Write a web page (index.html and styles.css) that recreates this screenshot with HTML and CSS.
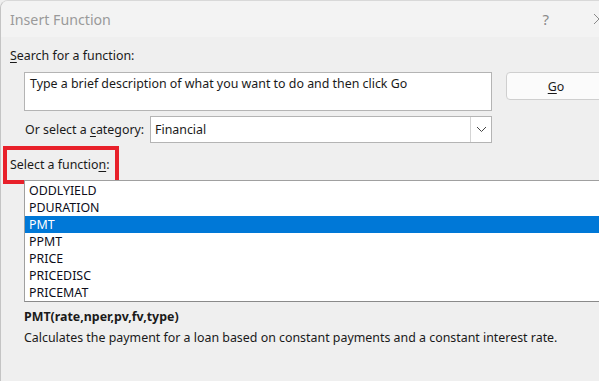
FILE: index.html
```html
<!DOCTYPE html>
<html>
<head>
<meta charset="utf-8">
<link rel="stylesheet" href="styles.css">
</head>
<body>
<div class="window">
  <div class="titlebar">
    <span class="title">Insert Function</span>
    <span class="help">?</span>
    <svg class="close" width="12" height="12" viewBox="0 0 12 12"><path d="M1 1 L11 11 M11 1 L1 11" stroke="#8a8a8a" stroke-width="1" fill="none"/></svg>
  </div>
  <div class="content">
    <div class="label search-label"><u>S</u>earch for a function:</div>
    <div class="search-row">
      <div class="search-box">Type a brief description of what you want to do and then click Go</div>
      <div class="go-btn"><u>G</u>o</div>
    </div>
    <div class="category-row">
      <span class="cat-label">Or select a <u>c</u>ategory:</span>
      <div class="select">
        <span class="select-text">Financial</span>
        <span class="select-btn">
          <svg width="11" height="7" viewBox="0 0 11 7"><path d="M1 1 L5.5 5.5 L10 1" stroke="#444" stroke-width="1" fill="none"/></svg>
        </span>
      </div>
    </div>
    <div class="fn-label-wrap">
      <span class="label">Select a functio<u>n</u>:</span>
      <span class="highlight-box"></span>
    </div>
    <div class="list">
      <div class="item">ODDLYIELD</div>
      <div class="item">PDURATION</div>
      <div class="item selected">PMT</div>
      <div class="item">PPMT</div>
      <div class="item">PRICE</div>
      <div class="item">PRICEDISC</div>
      <div class="item">PRICEMAT</div>
    </div>
    <div class="signature">PMT(rate,nper,pv,fv,type)</div>
    <div class="desc">Calculates the payment for a loan based on constant payments and a constant interest rate.</div>
  </div>
</div>
</body>
</html>
```

FILE: styles.css
```css
* { box-sizing: border-box; }
html, body {
  margin: 0;
  padding: 0;
  width: 599px;
  height: 381px;
  overflow: hidden;
  background: #efefef;
}
body {
  font-family: "Noto Sans", "Open Sans", sans-serif;
  font-size: 12.4px;
  color: #1a1a1a;
}
u { text-decoration: underline; text-underline-offset: 2px; }
.window {
  width: 599px;
  height: 381px;
  border-left: 1px solid #c4c4c4;
  border-top: 1px solid #d8d8d8;
  border-top-left-radius: 8px;
  background: #efefef;
  overflow: hidden;
}
.titlebar {
  height: 36px;
  background: #f3f3f3;
  display: flex;
  align-items: center;
  padding-left: 9px;
  position: relative;
}
.title {
  font-size: 14.2px;
  color: #9a9a9a;
  flex: 1;
}
.help {
  font-size: 15px;
  color: #8a8a8a;
  margin-right: 44px;
}
.close { margin-right: -6px; }
.content {
  padding-left: 9px;
}
.label { line-height: 16px; }
.search-label {
  margin-top: 11px;
}
.search-row {
  display: flex;
  align-items: flex-start;
  margin-top: 8px;
  margin-left: 14px;
}
.search-box {
  flex: none;
  width: 468px;
  height: 39px;
  border: 1px solid #b4b4b4;
  background: #fff;
  padding: 3px 5px;
  line-height: 16px;
  color: #1a1a1a;
}
.go-btn {
  margin-left: 14px;
  width: 100px;
  flex: none;
  height: 28px;
  border: 1px solid #cfcfcf;
  border-radius: 4px;
  background: #fbfbfb;
  display: flex;
  align-items: center;
  justify-content: center;
  padding-top: 1px;
}
.category-row {
  display: flex;
  align-items: center;
  margin-top: 5px;
  margin-left: 15px;
}
.cat-label {
  width: 125px;
  flex: none;
}
.select {
  flex: none;
  width: 342px;
  height: 27px;
  border: 1px solid #b4b4b4;
  background: #fff;
  display: flex;
  align-items: center;
}
.select-text {
  flex: 1;
  padding-left: 4px;
}
.select-btn {
  width: 21px;
  height: 25px;
  border-left: 1px solid #d4d4d4;
  display: flex;
  align-items: center;
  justify-content: center;
}
.fn-label-wrap {
  position: relative;
  height: 37px;
  display: flex;
  align-items: center;
  margin-top: 3px;
}
.highlight-box {
  position: absolute;
  left: -7px;
  top: 0;
  width: 116px;
  height: 38px;
  border: 4px solid #e8202a;
}
.list {
  margin-left: 14px;
  margin-top: -3px;
  width: 585px;
  height: 122px;
  border-top: 1px solid #a0a0a0;
  border-left: 1px solid #a0a0a0;
  border-bottom: 1px solid #8a8a8a;
  background: #fff;
  padding-top: 1px;
  padding-right: 3px;
  position: relative;
}
.list::after {
  content: "";
  position: absolute;
  right: 0;
  top: 0;
  bottom: 0;
  width: 3px;
  background: #f2f2f2;
}
.item {
  height: 17px;
  line-height: 18px;
  padding-left: 4px;
  color: #0d0d1a;
}
.item.selected {
  background: #0078d7;
  color: #fff;
}
.signature {
  margin-top: 7px;
  margin-left: 14px;
  font-weight: bold;
  line-height: 16px;
}
.desc {
  margin-top: 5px;
  margin-left: 14px;
  line-height: 16px;
}
```
